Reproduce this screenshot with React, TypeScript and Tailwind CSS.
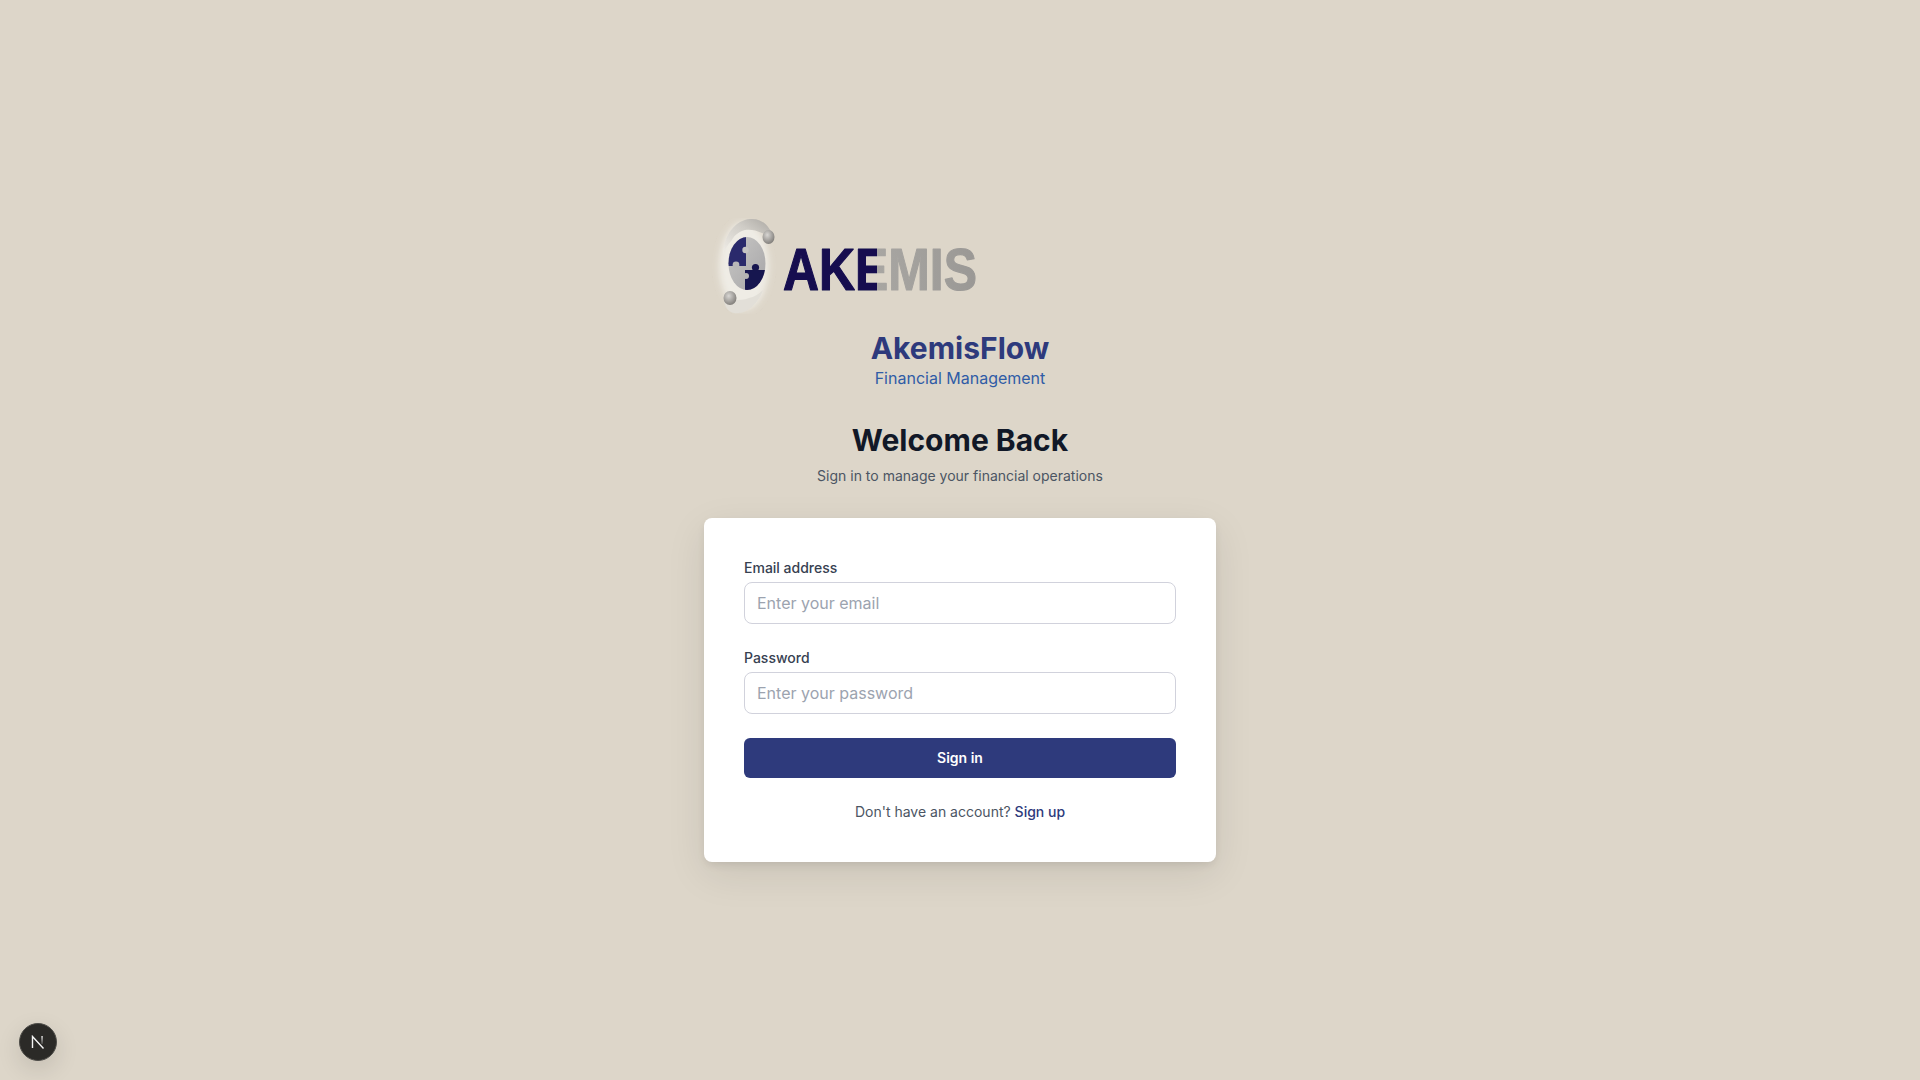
export default function App() {
  const font = { fontFamily: "Inter, sans-serif" };
  return (
    <div style={font} className="min-h-screen bg-[#ddd6c9] flex flex-col items-center justify-center antialiased">
      <div className="w-[512px] flex flex-col items-center">
        <div className="w-full">
          <svg width="340" height="96" viewBox="12 18 340 96" className="block ml-2">
            <defs>
              <filter id="soft" x="-10%" y="-10%" width="120%" height="120%"><feGaussianBlur stdDeviation="0.6" /></filter>
              <filter id="glow" x="-30%" y="-30%" width="160%" height="160%"><feGaussianBlur stdDeviation="3" /></filter>
              <linearGradient id="word" gradientUnits="userSpaceOnUse" x1="83" y1="0" x2="277" y2="0">
                <stop offset="0.485" stopColor="#14104f" />
                <stop offset="0.485" stopColor="#a8a6a2" />
                <stop offset="1" stopColor="#9a9895" />
              </linearGradient>
              <linearGradient id="ring" x1="0" y1="1" x2="1" y2="0">
                <stop offset="0" stopColor="#f0ede7" />
                <stop offset="0.6" stopColor="#cfccc6" />
                <stop offset="1" stopColor="#a9a6a1" />
              </linearGradient>
              <radialGradient id="ball" cx="0.4" cy="0.35" r="0.7">
                <stop offset="0" stopColor="#d8d6d3" />
                <stop offset="1" stopColor="#7d7a76" />
              </radialGradient>
              <linearGradient id="gray" x1="0" y1="0" x2="1" y2="1">
                <stop offset="0" stopColor="#c9c8c6" />
                <stop offset="1" stopColor="#a5a4a6" />
              </linearGradient>
              <clipPath id="sphere"><ellipse cx="47" cy="63.5" rx="18.5" ry="26.5" /></clipPath>
            </defs>
            <g filter="url(#soft)">
              <ellipse cx="44" cy="66" rx="25" ry="44" fill="#efece5" filter="url(#glow)" />
              <path d="M23 54 C 24 34 36 20 50 19 C 60 18 69 24 72 35 L 62 33 C 56 30 50 29 45 30 C 38 32 34 36 32 40 C 28 44 25 49 23 54 Z" fill="url(#ring)" />
              <path d="M24 100 C 25 108 29 112 34 113 C 46 115 58 104 63 90 C 59 94 54 97 49 98 C 44 100 39 100 35 100 Z" fill="#e2dfd8" />
              <ellipse cx="68.5" cy="37" rx="6" ry="7" fill="url(#ball)" />
              <ellipse cx="30" cy="98" rx="6.5" ry="7" fill="url(#ball)" />
              <g clipPath="url(#sphere)">
                <rect x="27" y="36" width="40" height="56" fill="url(#gray)" />
                <rect x="27" y="36" width="19" height="30" fill="#2b2a6c" />
                <circle cx="45.5" cy="50" r="3.2" fill="#c5c4c3" />
                <rect x="45" y="70" width="22" height="22" fill="#17134f" />
                <circle cx="55.5" cy="67.5" r="3.6" fill="#17134f" />
                <circle cx="36" cy="65" r="3.4" fill="#b9b8b8" />
                <circle cx="46" cy="76" r="3" fill="#b4b3b3" />
              </g>
              <text x="83" y="89.5" textLength="194" lengthAdjust="spacingAndGlyphs" fontFamily="'Liberation Sans', sans-serif" fontWeight="700" fontSize="60" fill="url(#word)" stroke="url(#word)" strokeWidth="1.2" strokeLinejoin="round">AKEMIS</text>
            </g>
          </svg>
        </div>
        <h1 className="mt-4 text-3xl font-bold text-[#2e3a7c]">AkemisFlow</h1>
        <p className="text-base text-[#2f5ca6]">Financial Management</p>
        <h2 className="mt-8 text-3xl font-bold text-[#111827]">Welcome Back</h2>
        <p className="mt-2 text-sm text-[#4b5563]">Sign in to manage your financial operations</p>
        <form className="mt-8 w-full bg-white rounded-lg shadow-[0_12px_40px_rgba(0,0,0,0.09),0_4px_10px_-2px_rgba(0,0,0,0.1)] p-10 flex flex-col gap-6">
          <div>
            <label className="block text-sm font-medium text-[#374151]">Email address</label>
            <input type="email" placeholder="Enter your email" className="mt-1 block w-full h-[42px] px-3 text-base bg-white border border-[#d1d2dc] rounded-lg outline-none placeholder:text-[#9ca3af]" />
          </div>
          <div>
            <label className="block text-sm font-medium text-[#374151]">Password</label>
            <input type="password" placeholder="Enter your password" className="mt-1 block w-full h-[42px] px-3 text-base bg-white border border-[#d1d2dc] rounded-lg outline-none placeholder:text-[#9ca3af]" />
          </div>
          <button type="button" className="h-10 w-full rounded-md bg-[#2e3a7c] text-white text-sm font-semibold">Sign in</button>
          <p className="text-sm text-center text-[#4b5563]">
            Don't have an account? <a className="font-medium text-[#2e3a7c]">Sign up</a>
          </p>
        </form>
      </div>
      <div className="fixed left-[19px] bottom-[19px] w-[38px] h-[38px] rounded-full bg-[#2b2a27] border border-[#4d4c48] shadow-[0_8px_24px_rgba(0,0,0,0.12)] flex items-center justify-center">
        <svg width="14" height="14" viewBox="0 0 14 14" fill="none">
          <defs>
            <linearGradient id="nfade" x1="0" y1="0" x2="0" y2="1">
              <stop offset="0" stopColor="#ffffff" />
              <stop offset="1" stopColor="#ffffff" stopOpacity="0.2" />
            </linearGradient>
          </defs>
          <path d="M1.5 13V1.5L12.5 13.5" stroke="#f4f4f4" strokeWidth="1.4" />
          <rect x="10.4" y="1" width="1.3" height="8" fill="url(#nfade)" />
        </svg>
      </div>
    </div>
  );
}
